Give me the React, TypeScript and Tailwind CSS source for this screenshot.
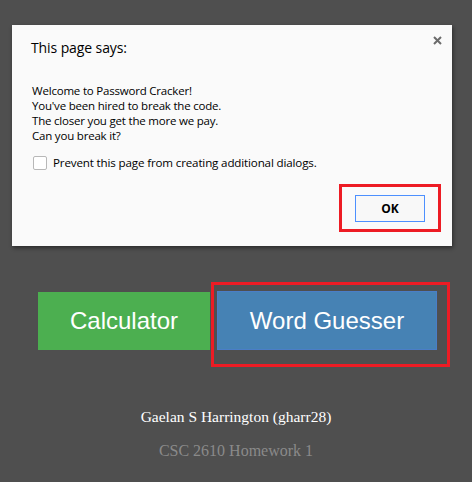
export default function App() {
  return (
    <main className="relative min-h-[482px] w-[472px] bg-[#4f4f4f] pt-[25px]">
      {/* Alert dialog */}
      <div className="relative mx-[12px] h-[221px] w-[440px] bg-[#fafafa] shadow-[1px_2px_4px_rgba(0,0,0,0.45)] font-['Open_Sans',sans-serif] text-black">
        <button className="absolute right-[8px] top-[8px] flex h-[14px] w-[14px] items-center justify-center text-[#666]">
          <svg width="9" height="9" viewBox="0 0 9 9">
            <path d="M1 1L8 8M8 1L1 8" stroke="#6b6b6b" strokeWidth="2" />
          </svg>
        </button>
        <h1 className="pl-[19px] pt-[13px] text-[14px] leading-[20px] tracking-[-0.1px]">This page says:</h1>
        <div className="mt-[25px] pl-[20px] text-[11.5px] leading-[15px] tracking-[-0.2px]">
          <p>Welcome to Password Cracker!</p>
          <p>You've been hired to break the code.</p>
          <p>The closer you get the more we pay.</p>
          <p>Can you break it?</p>
        </div>
        <label className="mt-[12px] flex items-center gap-[6px] pl-[21px] text-[11.6px] leading-[15px] tracking-[-0.15px]">
          <span className="h-[14px] w-[14px] rounded-[2px] border border-[#b8b8b8] bg-white" />
          Prevent this page from creating additional dialogs.
        </label>
        <div className="mt-[14px] flex justify-end pr-[11px]">
          <div className="border-[3px] border-[#ed1c24] px-[13px] pb-[7px] pt-[8px]">
            <button className="flex h-[27px] w-[70px] items-center justify-center border border-[#4d90fe] bg-[#f8f8f8] text-[12px] font-bold">
              OK
            </button>
          </div>
        </div>
      </div>

      {/* Page buttons */}
      <div className="relative mt-[45px] flex items-end gap-[7px] pl-[38px] font-['Liberation_Sans',Arial,sans-serif]">
        <button className="h-[58px] w-[172px] bg-[#4caf50] text-[24px] text-white">Calculator</button>
        <button className="h-[59px] w-[220px] border border-[#4a7ec8] bg-[#4682b4] text-[24px] text-white">Word Guesser</button>
        <div className="pointer-events-none absolute left-[211px] top-[-9px] h-[85px] w-[239px] border-[3px] border-[#ed1c24]" />
      </div>

      <div className="mt-[57px] text-center font-['Liberation_Serif',serif] leading-[20px]">
        <p className="text-[15.5px] text-white">Gaelan S Harrington (gharr28)</p>
        <p className="mt-[14px] text-[16px] text-[#8a8a8a]">CSC 2610 Homework 1</p>
      </div>
    </main>
  );
}
